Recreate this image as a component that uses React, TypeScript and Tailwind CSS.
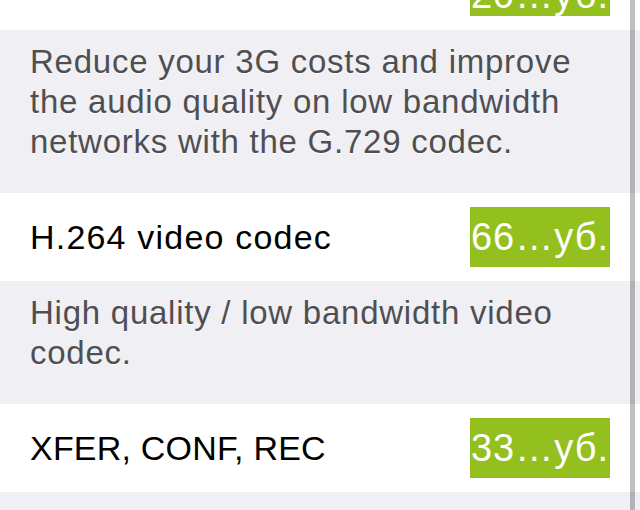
import React from "react";

type Item = {
  title: string;
  price: string;
  description: string;
  titleTracking: string;
  priceShift?: string;
};

const items: Item[] = [
  {
    title: "G.729 codec",
    price: "20…уб.",
    description:
      "Reduce your 3G costs and improve the audio quality on low bandwidth networks with the G.729 codec.",
    titleTracking: "tracking-[1px]",
    priceShift: "pt-[18px]",
  },
  {
    title: "H.264 video codec",
    price: "66…уб.",
    description: "High quality / low bandwidth video codec.",
    titleTracking: "tracking-[1.2px]",
  },
  {
    title: "XFER, CONF, REC",
    price: "33…уб.",
    description:
      "Add your features to transfer, conference and call recording from the call screen.",
    titleTracking: "tracking-[0.2px]",
  },
];

function PriceBadge({ price, shift }: { price: string; shift?: string }) {
  return (
    <div
      className={`flex h-[60px] w-[140px] shrink-0 items-center justify-center overflow-hidden bg-[#94c01f] text-[38px] leading-none tracking-[1px] text-white whitespace-nowrap ${shift ?? ""}`}
    >
      {price}
    </div>
  );
}

function FeatureRow({ item }: { item: Item }) {
  return (
    <div className="flex h-[88px] items-center justify-between bg-white pl-[30px] pr-[30px]">
      <span className={`text-[34px] leading-none text-black ${item.titleTracking}`}>{item.title}</span>
      <PriceBadge price={item.price} shift={item.priceShift} />
    </div>
  );
}

function Description({ text }: { text: string }) {
  return (
    <div className="bg-[#efeff4] pl-[30px] pr-[40px] pt-[12px] pb-[31px]">
      <p className="text-[33px] leading-[40px] tracking-[0.75px] text-[#4f4f53] [text-shadow:0_1px_0_rgba(255,255,255,0.9)]">
        {text}
      </p>
    </div>
  );
}

export default function App() {
  return (
    <div className="relative h-[510px] w-[640px] overflow-hidden bg-[#efeff4] font-['Liberation_Sans',Arial,sans-serif]">
      <div className="-mt-[58px] flex flex-col">
        {items.map((item, i) => (
          <React.Fragment key={i}>
            <FeatureRow item={item} />
            <Description text={item.description} />
          </React.Fragment>
        ))}
      </div>

      {/* scroll indicator */}
      <div className="absolute right-[5px] top-0 h-full w-[5px] bg-black/25" />
    </div>
  );
}
